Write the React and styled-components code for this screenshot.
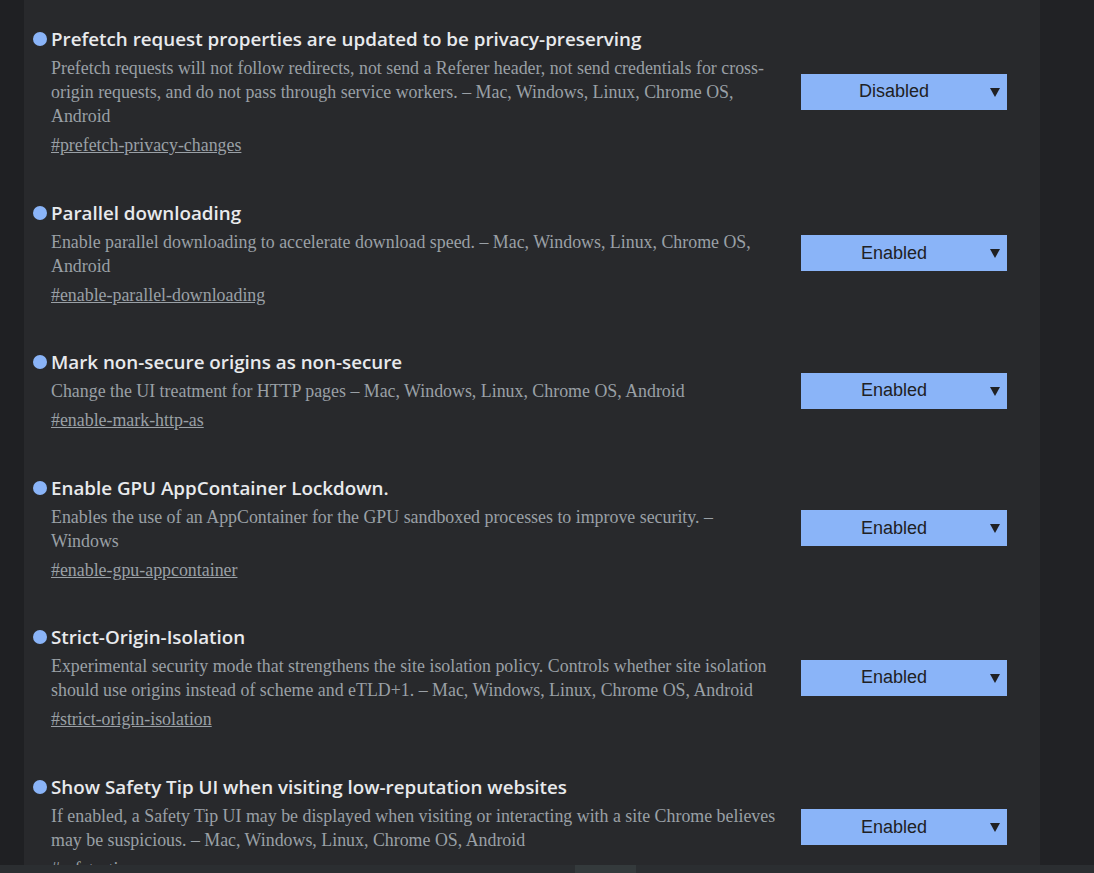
import React from "react";
import styled, { createGlobalStyle } from "styled-components";

const Global = createGlobalStyle`
  html, body { margin: 0; padding: 0; background: #202124; }
  body { width: 1094px; height: 873px; overflow: hidden; }
  * { box-sizing: border-box; }
`;

const Page = styled.div`
  display: flex;
  flex-direction: column;
  width: 1094px;
  height: 873px;
  background: #202124;
`;

const Body = styled.div`
  flex: 1;
  min-height: 0;
  display: grid;
  grid-template-columns: 24px 1016px 1fr;
  overflow: hidden;
`;

const Side = styled.div`
  background: ${(p) => (p.$right ? "#212225" : "#1f2023")};
`;

const Panel = styled.main`
  background: #28292c;
  padding: 5px 33px 0 9px;
  overflow: hidden;
`;

const Row = styled.section`
  display: flex;
  align-items: center;
  padding: 21px 0 21.5px;
`;

const Content = styled.div`
  flex: 1;
  min-width: 0;
  padding-right: 20px;
`;

const TitleLine = styled.h2`
  margin: 0 0 4px;
  display: flex;
  align-items: center;
  gap: 4px;
  font-family: "Open Sans", "Noto Sans", sans-serif;
  font-weight: 600;
  font-size: 18.8px;
  line-height: 26px;
  color: #e8eaed;
  letter-spacing: 0;
`;

const Dot = styled.span`
  flex: none;
  width: 14px;
  height: 14px;
  border-radius: 50%;
  background: #8ab4f8;
`;

const Desc = styled.p`
  margin: 0 0 0 18px;
  font-family: "Liberation Serif", "Times New Roman", serif;
  font-size: 17.88px;
  line-height: 24px;
  color: #9aa0a6;
`;

const Link = styled.a`
  display: block;
  margin: 5px 0 0 18px;
  font-family: "Liberation Serif", "Times New Roman", serif;
  font-size: 17.88px;
  line-height: 24px;
  color: #9aa0a6;
  text-decoration: underline;
`;

const Select = styled.div`
  position: relative;
  flex: none;
  width: 206px;
  height: 36px;
  display: flex;
  align-items: center;
  justify-content: center;
  padding-right: 20px;
  background: #8ab4f8;
  font-family: "Liberation Sans", Arial, sans-serif;
  font-size: 18px;
  color: #202124;
`;

const Arrow = styled.span`
  position: absolute;
  right: 7px;
  top: 14px;
  width: 0;
  height: 0;
  border-left: 5px solid transparent;
  border-right: 5px solid transparent;
  border-top: 9px solid #202124;
`;

const ScrollBar = styled.div`
  flex: none;
  height: 8px;
  background: #2b2e31;
  display: flex;
  padding-left: 575px;
`;

const Thumb = styled.div`
  width: 61px;
  height: 100%;
  background: #343a3c;
`;

const flags = [
  {
    title: "Prefetch request properties are updated to be privacy-preserving",
    desc: "Prefetch requests will not follow redirects, not send a Referer header, not send credentials for cross-origin requests, and do not pass through service workers. – Mac, Windows, Linux, Chrome OS, Android",
    link: "#prefetch-privacy-changes",
    value: "Disabled",
  },
  {
    title: "Parallel downloading",
    desc: "Enable parallel downloading to accelerate download speed. – Mac, Windows, Linux, Chrome OS, Android",
    link: "#enable-parallel-downloading",
    value: "Enabled",
  },
  {
    title: "Mark non-secure origins as non-secure",
    desc: "Change the UI treatment for HTTP pages – Mac, Windows, Linux, Chrome OS, Android",
    link: "#enable-mark-http-as",
    value: "Enabled",
  },
  {
    title: "Enable GPU AppContainer Lockdown.",
    desc: "Enables the use of an AppContainer for the GPU sandboxed processes to improve security. – Windows",
    link: "#enable-gpu-appcontainer",
    value: "Enabled",
  },
  {
    title: "Strict-Origin-Isolation",
    desc: "Experimental security mode that strengthens the site isolation policy. Controls whether site isolation should use origins instead of scheme and eTLD+1. – Mac, Windows, Linux, Chrome OS, Android",
    link: "#strict-origin-isolation",
    value: "Enabled",
  },
  {
    title: "Show Safety Tip UI when visiting low-reputation websites",
    desc: "If enabled, a Safety Tip UI may be displayed when visiting or interacting with a site Chrome believes may be suspicious. – Mac, Windows, Linux, Chrome OS, Android",
    link: "#safety-tip",
    value: "Enabled",
  },
];

export default function App() {
  return (
    <Page>
      <Global />
      <Body>
        <Side />
        <Panel>
          {flags.map((f) => (
            <Row key={f.link}>
              <Content>
                <TitleLine>
                  <Dot />
                  {f.title}
                </TitleLine>
                <Desc>{f.desc}</Desc>
                <Link href={f.link}>{f.link}</Link>
              </Content>
              <Select>
                {f.value}
                <Arrow />
              </Select>
            </Row>
          ))}
        </Panel>
        <Side $right />
      </Body>
      <ScrollBar>
        <Thumb />
      </ScrollBar>
    </Page>
  );
}
